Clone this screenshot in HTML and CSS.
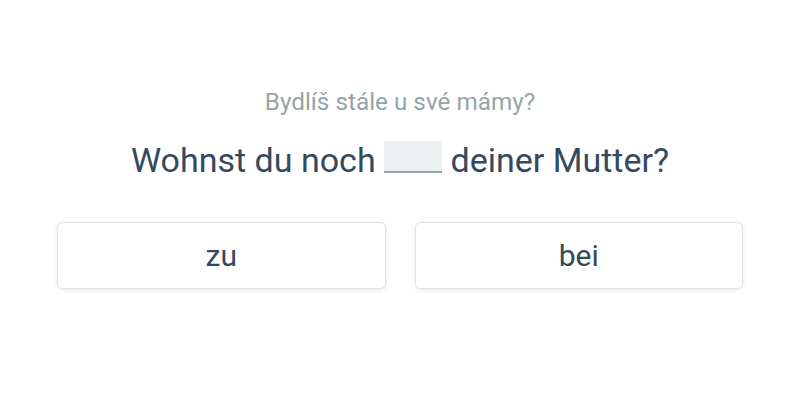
FILE: index.html
```html
<!DOCTYPE html>
<html>
<head>
<meta charset="utf-8">
<link rel="stylesheet" href="styles.css">
</head>
<body>
<div class="quiz">
  <div class="hint">Bydlíš stále u své mámy?</div>
  <div class="sentence">Wohnst du noch <span class="blank"></span> deiner Mutter?</div>
  <div class="options">
    <button class="option">zu</button>
    <button class="option">bei</button>
  </div>
</div>
</body>
</html>
```

FILE: styles.css
```css
html, body {
  margin: 0;
  padding: 0;
  background: #ffffff;
}
body {
  font-family: Roboto, "Noto Sans", sans-serif;
  width: 800px;
  height: 400px;
}
.quiz {
  display: flex;
  flex-direction: column;
  align-items: center;
  padding: 88px 57px 0;
}
.hint {
  font-size: 24.3px;
  line-height: 28px;
  color: #95a5a6;
}
.sentence {
  margin-top: 24px;
  font-size: 34px;
  line-height: 40px;
  color: #34495e;
}
.blank {
  display: inline-block;
  width: 58px;
  height: 30px;
  background: #ecf0f1;
  border-bottom: 2px solid #95a5a6;
  vertical-align: -1px;
}
.options {
  margin-top: 42px;
  display: flex;
  gap: 29px;
  width: 100%;
}
.option {
  flex: 1;
  height: 67px;
  background: #ffffff;
  border: 1px solid #e1e4e6;
  border-radius: 6px;
  box-shadow: 0 1px 4px rgba(0,0,0,0.1);
  font-family: Roboto, "Noto Sans", sans-serif;
  font-size: 30px;
  color: #34495e;
  padding: 0;
}
```
